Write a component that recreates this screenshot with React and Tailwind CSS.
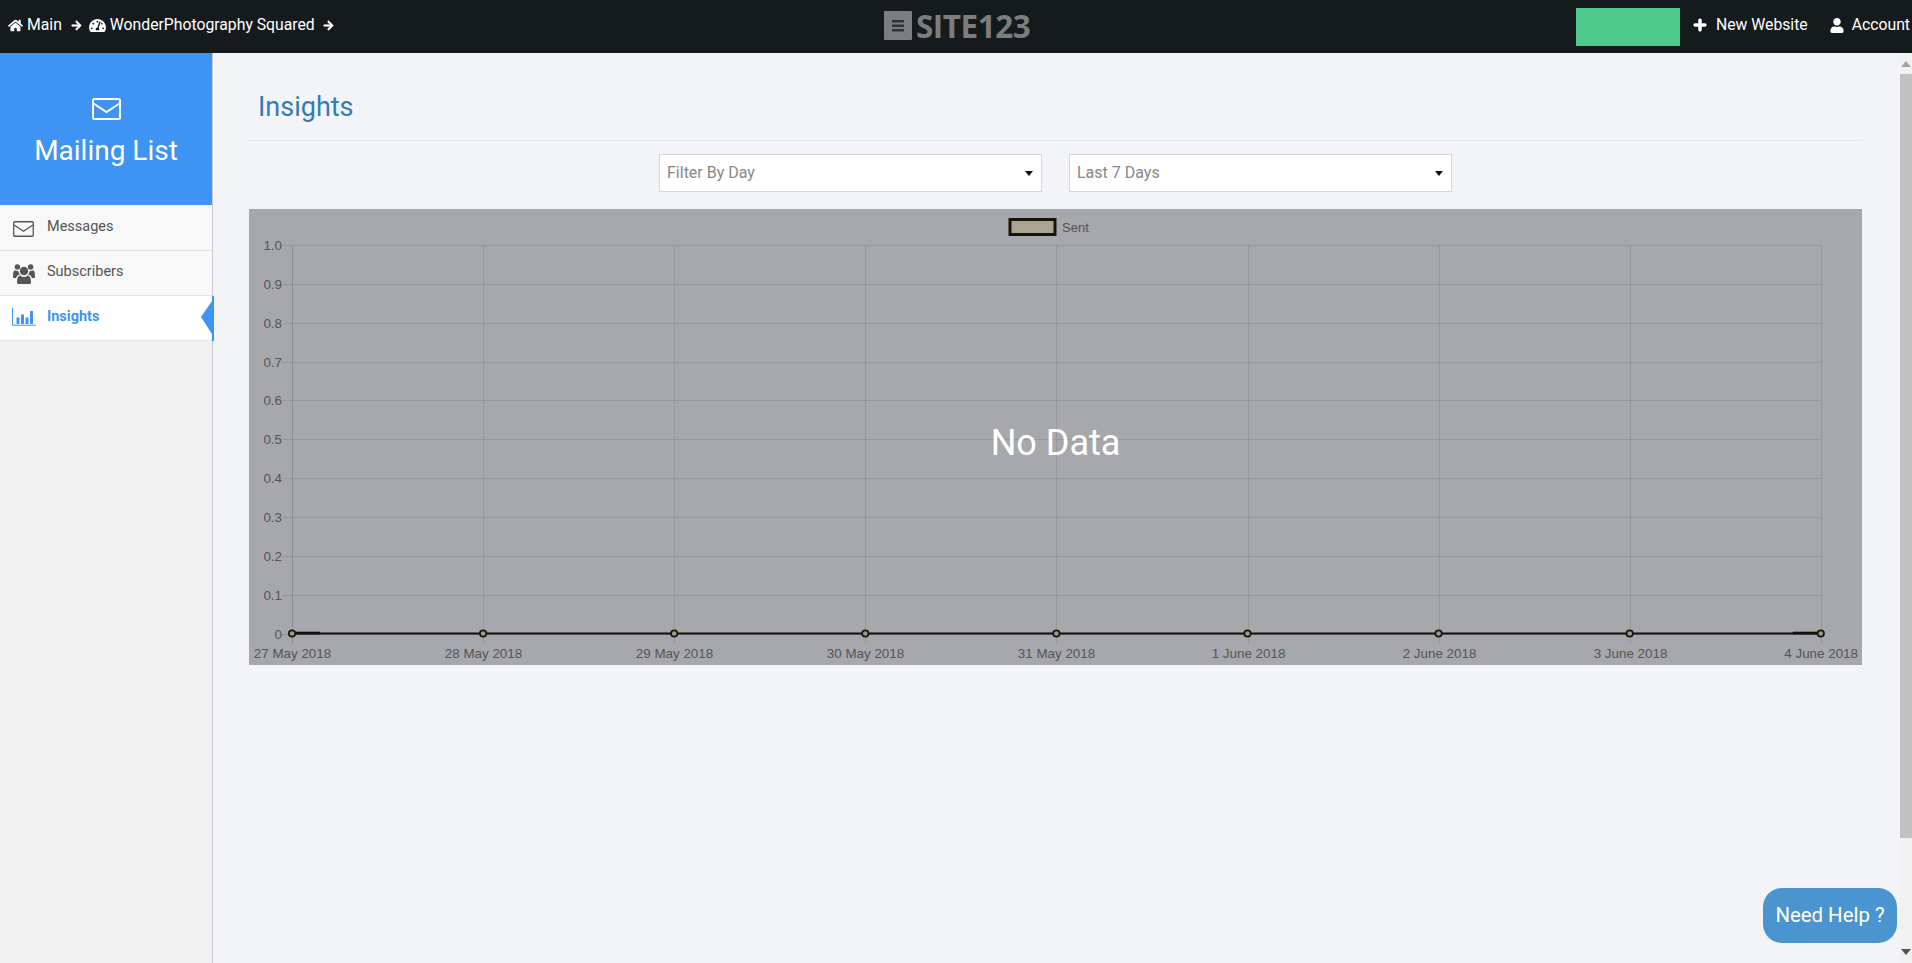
import React from 'react';
import { FaHome, FaTachometerAlt, FaArrowRight, FaPlus, FaUser } from 'react-icons/fa';

const dates = ['27 May 2018', '28 May 2018', '29 May 2018', '30 May 2018', '31 May 2018', '1 June 2018', '2 June 2018', '3 June 2018', '4 June 2018'];
const ticks = ['1.0', '0.9', '0.8', '0.7', '0.6', '0.5', '0.4', '0.3', '0.2', '0.1', '0'];
const X0 = 43;
const XS = 191.1;
const Y0 = 36;
const YS = 38.85;

function Chart() {
  const bottom = Y0 + YS * 10;
  const right = X0 + XS * 8;
  return (
    <svg viewBox="0 0 1613 456" className="block w-[1613px] h-[456px] bg-[#a7a8ab]">
      <rect x="761" y="10.5" width="45" height="15" fill="#aba494" stroke="#15150c" strokeWidth="3" />
      <text x="813" y="23" className="fill-[#555] text-[13px] font-['Liberation_Sans',sans-serif]">Sent</text>
      {ticks.map((t, i) => {
        const y = Math.round(Y0 + YS * i) + 0.5;
        return (
          <g key={t}>
            <line x1={X0 - 10} x2={right} y1={y} y2={y} stroke={i === 10 ? '#8c8d90' : '#97989b'} />
            <text x={X0 - 10} y={y + 4.5} textAnchor="end" className="fill-[#555] text-[13.4px] font-['Liberation_Sans',sans-serif]">{t}</text>
          </g>
        );
      })}
      {dates.map((d, i) => {
        const x = Math.round(X0 + XS * i) + 0.5;
        const anchor = i === 8 ? 'end' : 'middle';
        const tx = i === 8 ? 1609 : x;
        return (
          <g key={d}>
            <line x1={x} x2={x} y1={Y0} y2={bottom + 10} stroke={i === 0 ? '#8c8d90' : '#97989b'} />
            <text x={tx} y={bottom + 24} textAnchor={anchor} className="fill-[#555] text-[13.4px] font-['Liberation_Sans',sans-serif]">{d}</text>
          </g>
        );
      })}
      <line x1={X0} x2={right} y1={bottom} y2={bottom} stroke="#111" strokeWidth="2" />
      <line x1={X0} x2={X0 + 28} y1={bottom - 0.5} y2={bottom - 0.5} stroke="#111" strokeWidth="2.6" />
      <line x1={right - 28} x2={right} y1={bottom - 0.5} y2={bottom - 0.5} stroke="#111" strokeWidth="2.6" />
      {dates.map((d, i) => (
        <circle key={d} cx={X0 + XS * i} cy={bottom} r="3.2" fill="#a09a86" stroke="#15150c" strokeWidth="1.7" />
      ))}
      <text x="806.5" y="246" textAnchor="middle" className="fill-white text-[36px] font-['Roboto',sans-serif]">No Data</text>
    </svg>
  );
}

function Select({ label }) {
  return (
    <div className="w-[383px] h-[38px] bg-white border border-[#d6d6d6] flex items-center justify-between pl-[7px] pr-[8px]">
      <span className="text-[16px] text-[#888]">{label}</span>
      <svg width="8" height="5" viewBox="0 0 8 5"><path d="M0 0h8L4 5z" fill="#111" /></svg>
    </div>
  );
}

function Envelope({ className, sw = 1.5 }) {
  return (
    <svg viewBox="0 0 29 22" fill="none" stroke="currentColor" strokeWidth={sw} className={className}>
      <rect x="1" y="1" width="27" height="20" rx="1.5" />
      <path d="M1.5 5.5 L14.5 14 L27.5 5.5" />
    </svg>
  );
}

function UsersIcon() {
  return (
    <svg width="22" height="20" viewBox="0 0 22 20" fill="currentColor">
      <circle cx="11" cy="7" r="4.2" />
      <circle cx="4.4" cy="3" r="2.7" />
      <circle cx="17.6" cy="3" r="2.7" />
      <path d="M5.5 20 C4.5 20 4 19.3 4 18.5 C4 15 4.8 11.5 7.5 11.5 C8.5 12.6 9.7 13 11 13 C12.3 13 13.5 12.6 14.5 11.5 C17.2 11.5 18 15 18 18.5 C18 19.3 17.5 20 16.5 20 Z" />
      <path d="M2 6.3 C3 7 4 7.2 5.2 6.9 C5.6 8.4 6.2 9.4 7 10.2 C4.6 10.8 3.4 12.5 3.1 14 H1 C0.4 14 0 13.6 0 13 C0 10 0.3 6.6 2 6.3 Z" />
      <path d="M20 6.3 C19 7 18 7.2 16.8 6.9 C16.4 8.4 15.8 9.4 15 10.2 C17.4 10.8 18.6 12.5 18.9 14 H21 C21.6 14 22 13.6 22 13 C22 10 21.7 6.6 20 6.3 Z" />
    </svg>
  );
}

function NavRow({ icon, label, className = 'h-[45px]' }) {
  return (
    <div className={`relative bg-[#f8f8f8] border-b border-[#e2e2e2] flex items-center text-[#555] ${className}`}>
      <span className="w-[47px] flex justify-center pl-[1px] pr-[1px] pt-[2px]">{icon}</span>
      <span className="text-[14.5px] mt-[-3px]">{label}</span>
    </div>
  );
}

export default function App() {
  return (
    <div className="h-[963px] flex flex-col overflow-hidden bg-[#f2f4f8] font-['Roboto',sans-serif] relative">
      <header className="h-[53px] shrink-0 bg-[#151b1d] flex items-center relative text-white text-[15.75px]">
        <div className="flex items-center pl-[8px] mt-[-3px]">
          <FaHome className="w-[15px] h-[15px] mr-[4px]" />
          <span>Main</span>
          <FaArrowRight className="w-[11px] h-[11px] ml-[9px] mr-[7px] stroke-current stroke-[24]" />
          <FaTachometerAlt className="w-[17px] h-[15px] mr-[4px]" />
          <span>WonderPhotography Squared</span>
          <FaArrowRight className="w-[11px] h-[11px] ml-[8px] stroke-current stroke-[24]" />
        </div>
        <div className="absolute left-[884px] top-[11px] flex items-center text-[#7b7d7f]">
          <svg width="28" height="29" viewBox="0 0 28 29">
            <rect width="28" height="29" rx="1" fill="#7b7d7f" />
            <path d="M8 9h12v2.5H8zM8 13.5h12V16H8zM8 18h12v2.5H8z" fill="#2d3236" />
          </svg>
          <span className="ml-[4px] text-[31.5px] leading-[29px] font-bold font-['Open_Sans',sans-serif] tracking-[-0.5px]">SITE123</span>
        </div>
        <div className="ml-auto flex items-center">
          <div className="w-[104px] h-[38px] bg-[#4ccb8a] mr-[13px]" />
          <div className="flex items-center mt-[-3px]">
            <FaPlus className="w-[14px] h-[14px] mr-[9px] stroke-current stroke-[30]" />
            <span>New Website</span>
            <FaUser className="w-[14px] h-[15px] ml-[22px] mr-[8px]" />
            <span className="mr-[2px]">Account</span>
          </div>
        </div>
      </header>
      <div className="flex-1 flex min-h-0">
        <aside className="w-[213px] shrink-0 bg-[#f1f1f1] border-r border-[#c9c9c9]">
          <div className="h-[152px] bg-[#3f93f3] flex flex-col items-center text-white">
            <Envelope className="w-[29px] h-[22px] mt-[45px]" sw={2} />
            <div className="text-[28px] leading-[36px] mt-[13px]">Mailing List</div>
          </div>
          <NavRow className="h-[46px] pt-[1px]" icon={<Envelope className="w-[21px] h-[16px]" sw={1.8} />} label="Messages" />
          <NavRow icon={<UsersIcon />} label="Subscribers" />
          <div className="relative h-[45px] bg-white border-b border-[#e2e2e2] flex items-center text-[#3f93f3]">
            <span className="w-[47px] flex justify-center mt-[-2px]">
              <svg width="24" height="18" viewBox="0 0 24 18" fill="currentColor">
                <path d="M0.5 0v17.2H24" fill="none" stroke="currentColor" />
                <path d="M4.5 9.5h3v6.5h-3zM9 6.5h3V16H9zM13.5 9.5h3V16h-3zM18 3h3v13h-3z" />
              </svg>
            </span>
            <span className="text-[14.5px] font-bold mt-[-3px]">Insights</span>
            <svg width="13" height="45" viewBox="0 0 13 45" className="absolute right-[-2px] top-0" fill="#3f93f3">
              <path d="M11 0h2v45h-2zM11 5 L0 21 L11 38z" />
            </svg>
          </div>
        </aside>
        <main className="flex-1 min-w-0 pl-[36px] pr-[38px]">
          <h1 className="h-[88px] pl-[9px] pt-[34px] text-[27px] leading-[40px] text-[#337ab7] border-b border-dotted border-[#dcdee2]">Insights</h1>
          <div className="flex justify-center gap-[27px] mt-[13px] mb-[17px]">
            <Select label="Filter By Day" />
            <Select label="Last 7 Days" />
          </div>
          <Chart />
        </main>
        <div className="w-[12px] shrink-0 bg-[#f1f1f1] flex flex-col items-center">
          <svg width="10" height="6" viewBox="0 0 10 6" className="mt-[8px] mb-[7px]"><path d="M0 6h10L5 0z" fill="#a3a3a3" /></svg>
          <div className="w-full h-[764px] bg-[#c1c1c1]" />
          <svg width="10" height="6" viewBox="0 0 10 6" className="mt-[111px]"><path d="M0 0h10L5 6z" fill="#505050" /></svg>
        </div>
      </div>
      <div className="absolute left-[1763px] top-[888px] w-[134px] h-[55px] rounded-[19px] bg-[#4a94cf] text-white text-[20.4px] flex items-center justify-center">Need Help ?</div>
    </div>
  );
}
